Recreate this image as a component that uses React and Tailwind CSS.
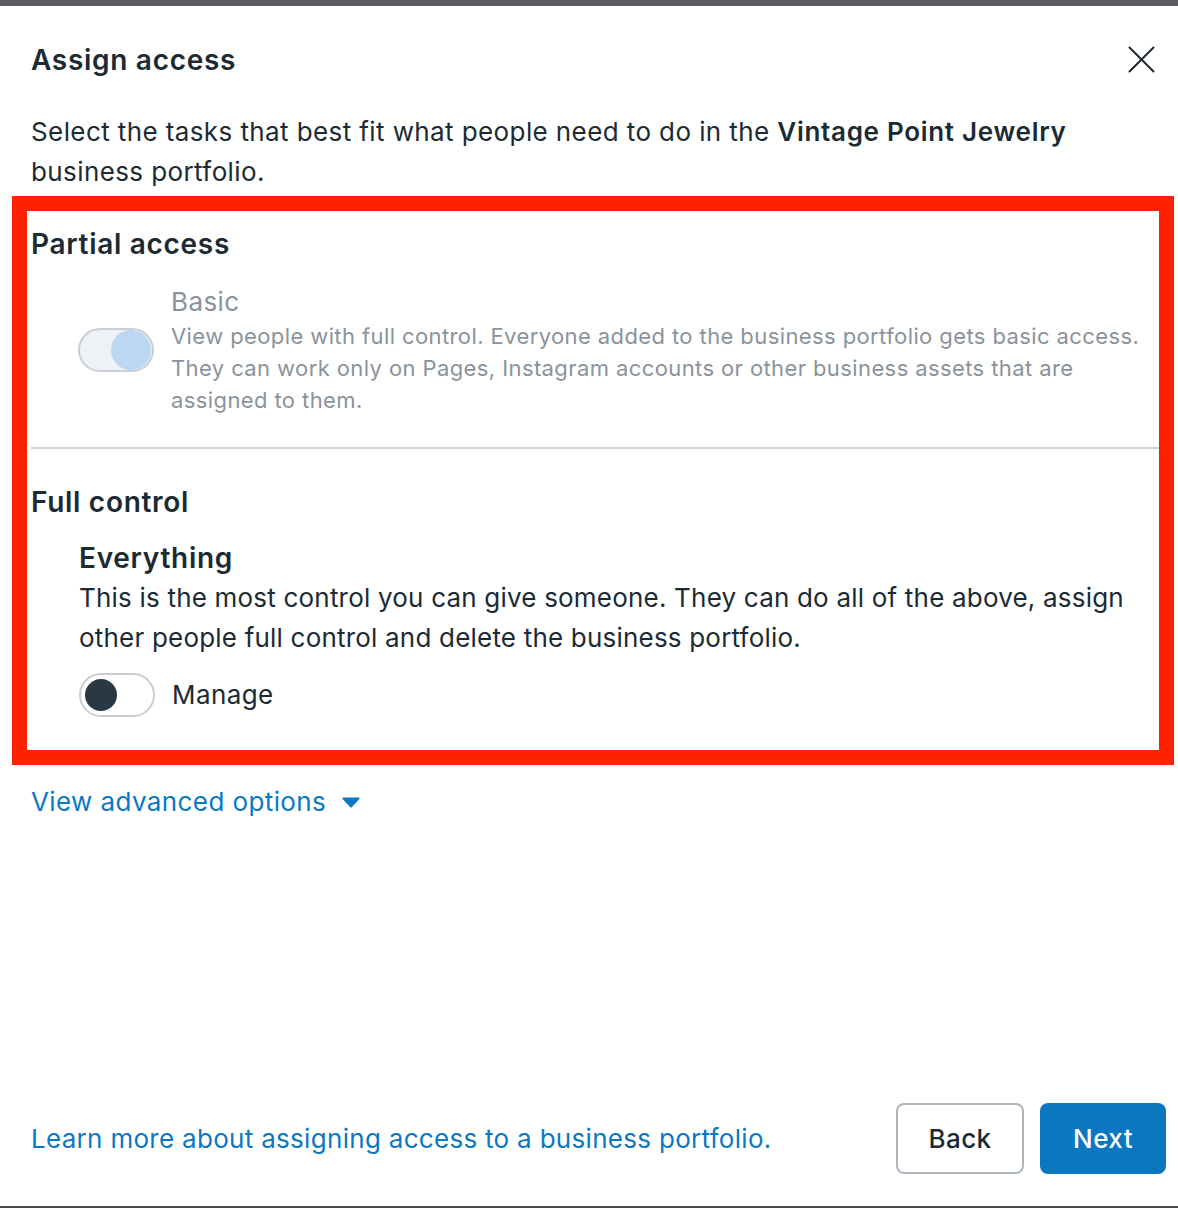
const font = { fontFamily: 'Inter, "Noto Sans", sans-serif' };

const Toggle = ({ on, disabled }) => {
  if (disabled) {
    return (
      <div className="flex h-[44px] w-[76px] shrink-0 items-center justify-end rounded-full border-2 border-[#c9ced4] bg-[#eef1f5] px-[1px]">
        <span className="h-[40px] w-[40px] rounded-full bg-[#bcd7f1]" />
      </div>
    );
  }
  return (
    <div className={`flex h-[44px] w-[76px] shrink-0 items-center rounded-full border-2 border-[#c9ced4] bg-white px-[4px] ${on ? 'justify-end' : 'justify-start'}`}>
      <span className="h-[32px] w-[32px] rounded-full bg-[#283845]" />
    </div>
  );
};

export default function App() {
  return (
    <div style={font} className="relative flex h-[1208px] w-[1178px] flex-col bg-white text-[#1c2b33] tracking-[0.4px]">
      <div className="h-[6px] w-full bg-[#5d5c63]" />

      <div className="flex items-center justify-between pl-[31px] pr-[23px] pt-[36px]">
        <h1 className="text-[28px] font-semibold leading-[36px] tracking-[0.7px]">Assign access</h1>
        <svg width="27" height="27" viewBox="0 0 27 27" className="mt-[-2px]">
          <path d="M1.5 1.5 L25.5 25.5 M25.5 1.5 L1.5 25.5" stroke="#1c2b33" strokeWidth="2" strokeLinecap="round" />
        </svg>
      </div>

      <p className="mt-[34px] px-[31px] text-[26px] leading-[40px]">
        Select the tasks that best fit what people need to do in the{' '}
        <span className="font-semibold tracking-[0.7px]">Vintage Point Jewelry</span> business portfolio.
      </p>

      <div className="ml-[12px] mr-[4px] mt-[4px] border-[15px] border-[#ff2200] pb-[33px] pl-[4px] pt-[15px]">
        <h2 className="text-[28px] font-semibold leading-[36px] tracking-[0.7px]">Partial access</h2>
        <div className="mt-[22px] flex items-center gap-[17px] pl-[47px]">
          <Toggle disabled />
          <div>
            <div className="text-[26px] leading-[36px] text-[#8a939b]">Basic</div>
            <p className="text-[22px] leading-[32px] text-[#8a939b]">
              View people with full control. Everyone added to the business portfolio gets basic access. They can work only on Pages, Instagram accounts or other business assets that are assigned to them.
            </p>
          </div>
        </div>

        <div className="mt-[31px] h-[2px] bg-[#ced3d9]" />

        <h2 className="mt-[35px] text-[28px] font-semibold leading-[36px] tracking-[0.7px]">Full control</h2>
        <div className="mt-[20px] pl-[48px]">
          <div className="text-[28px] font-semibold leading-[36px] tracking-[0.7px]">Everything</div>
          <p className="mt-[2px] text-[26px] leading-[40px] tracking-[0.2px]">
            This is the most control you can give someone. They can do all of the above, assign other people full control and delete the business portfolio.
          </p>
          <div className="mt-[15px] flex items-center gap-[17px]">
            <Toggle />
            <span className="text-[26px] leading-[36px]">Manage</span>
          </div>
        </div>
      </div>

      <button className="mt-[19px] flex items-center gap-[16px] self-start pl-[31px] text-[26px] leading-[36px] tracking-[0.4px] text-[#0a78c2]">
        View advanced options
        <svg width="18" height="11" viewBox="0 0 18 11">
          <path d="M1.5 1.5 H16.5 L9 9.5 Z" fill="#0a78c2" stroke="#0a78c2" strokeWidth="2" strokeLinejoin="round" />
        </svg>
      </button>

      <div className="flex-1" />

      <div className="flex items-center justify-between pb-[32px] pl-[31px] pr-[12px]">
        <a className="text-[26px] leading-[36px] tracking-[0.3px] text-[#0a78c2]">Learn more about assigning access to a business portfolio.</a>
        <div className="flex gap-[16px]">
          <button className="h-[71px] w-[128px] rounded-[8px] border-2 border-[#adb5bd] bg-white text-[26px] font-medium text-[#1c2b33]">Back</button>
          <button className="h-[71px] w-[126px] rounded-[8px] bg-[#0a77c0] text-[26px] font-medium text-white">Next</button>
        </div>
      </div>

      <div className="h-[2px] w-full bg-[#4a4a4f]" />
    </div>
  );
}
